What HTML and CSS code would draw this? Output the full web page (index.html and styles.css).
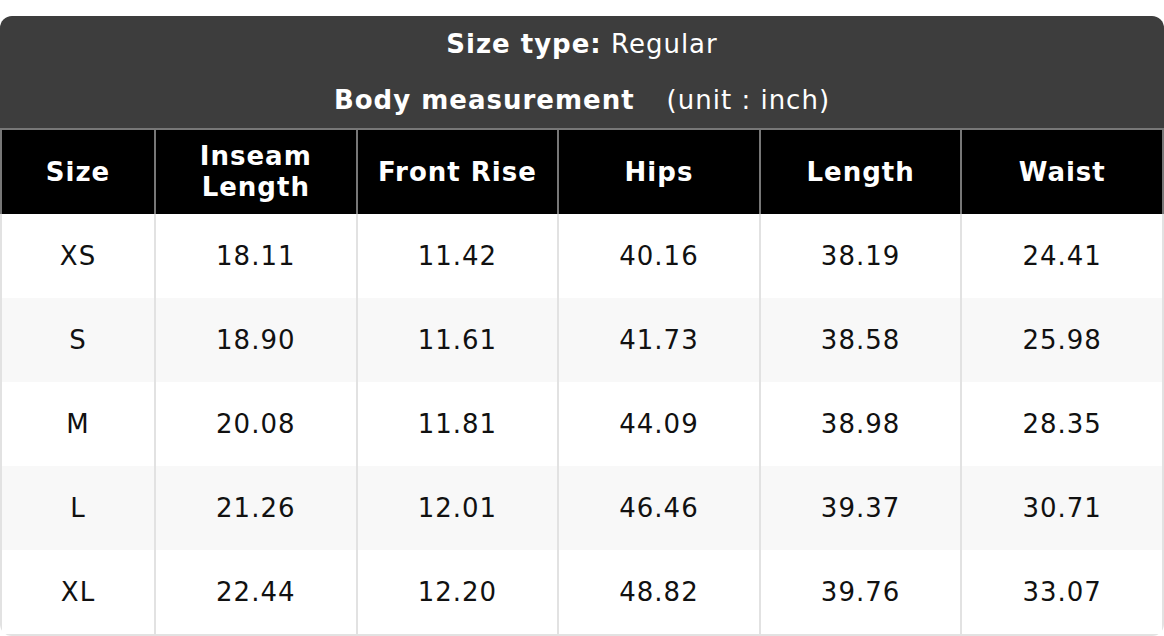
FILE: index.html
```html
<!DOCTYPE html>
<html lang="en">
<head>
<meta charset="utf-8">
<title>Size chart</title>
<link rel="stylesheet" href="styles.css">
</head>
<body>
<div class="chart">
  <div class="chart-head">
    <div class="chart-line"><strong>Size type:</strong> Regular</div>
    <div class="chart-line"><strong>Body measurement</strong><span class="unit">(unit : inch)</span></div>
  </div>
  <table class="size-table">
    <thead>
      <tr>
        <th class="col-size">Size</th>
        <th>Inseam<br>Length</th>
        <th>Front Rise</th>
        <th>Hips</th>
        <th>Length</th>
        <th>Waist</th>
      </tr>
    </thead>
    <tbody>
      <tr><td>XS</td><td>18.11</td><td>11.42</td><td>40.16</td><td>38.19</td><td>24.41</td></tr>
      <tr><td>S</td><td>18.90</td><td>11.61</td><td>41.73</td><td>38.58</td><td>25.98</td></tr>
      <tr><td>M</td><td>20.08</td><td>11.81</td><td>44.09</td><td>38.98</td><td>28.35</td></tr>
      <tr><td>L</td><td>21.26</td><td>12.01</td><td>46.46</td><td>39.37</td><td>30.71</td></tr>
      <tr><td>XL</td><td>22.44</td><td>12.20</td><td>48.82</td><td>39.76</td><td>33.07</td></tr>
    </tbody>
  </table>
</div>
</body>
</html>
```

FILE: styles.css
```css
html, body {
  margin: 0;
  padding: 0;
  background: #ffffff;
}

body {
  padding-top: 16px;
  font-family: "DejaVu Sans", Verdana, sans-serif;
  font-size: 26px;
  letter-spacing: 1px;
  color: #111111;
}

.chart {
  width: 1164px;
  border-radius: 12px;
  overflow: hidden;
  background: #ffffff;
}

.chart-head {
  background: #3d3d3d;
  color: #ffffff;
  text-align: center;
}

.chart-line {
  height: 56px;
  line-height: 56px;
}

.chart-line strong {
  font-weight: bold;
}

.unit {
  margin-left: 32px;
}

.size-table {
  width: 1164px;
  border-collapse: separate;
  border-spacing: 0;
  table-layout: fixed;
}

.size-table th {
  background: #000000;
  color: #ffffff;
  font-weight: bold;
  font-size: 26px;
  line-height: 31px;
  height: 84px;
  padding: 0;
  border-top: 2px solid #777777;
  border-right: 2px solid #777777;
  text-align: center;
  vertical-align: middle;
}

.size-table th:first-child {
  border-left: 2px solid #777777;
}

.size-table .col-size {
  width: 152px;
}

.size-table td {
  height: 84px;
  padding: 0;
  text-align: center;
  vertical-align: middle;
  border-right: 2px solid #e2e2e2;
  line-height: 30px;
}

.size-table td:first-child {
  border-left: 2px solid #e2e2e2;
}

.size-table tbody tr:nth-child(even) td {
  background: #f8f8f8;
}

.size-table tbody tr:last-child td {
  border-bottom: 2px solid #e2e2e2;
}
```
